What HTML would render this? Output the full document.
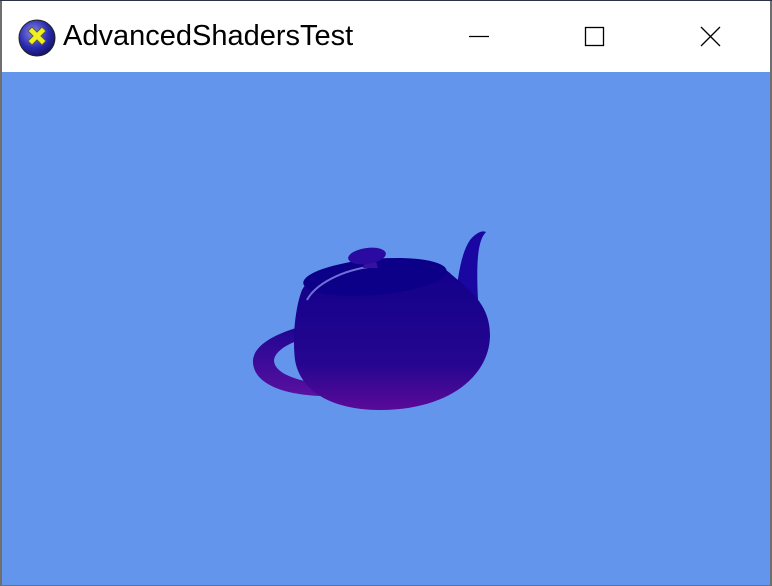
<!DOCTYPE html>
<html><head><style>
html,body{margin:0;padding:0;width:772px;height:586px;overflow:hidden;background:#6f6f6f;}
.win{position:absolute;left:2px;top:1px;width:768px;height:584px;background:#6495ED;}
.tb{position:absolute;left:0;top:0;width:768px;height:71px;background:#fff;}
.top{position:absolute;left:0;top:0;width:772px;height:1px;background:#2b3447;}
.title{position:absolute;left:61px;top:19px;font:29px "Liberation Sans",sans-serif;color:#000;letter-spacing:0;}
</style></head><body>
<div class="top"></div>
<div class="win">
 <div class="tb">
  <svg width="40" height="40" style="position:absolute;left:15px;top:17px" viewBox="0 0 40 40">
   <defs><radialGradient id="g" cx="0.4" cy="0.35" r="0.7"><stop offset="0" stop-color="#8a8ae8"/><stop offset="0.6" stop-color="#2a2ab0"/><stop offset="1" stop-color="#101060"/></radialGradient></defs>
   <circle cx="20" cy="20" r="18" fill="url(#g)" stroke="#222" stroke-width="1"/>
   <path d="M11 13 L15 9 L20 14 L25 9 L29 13 L24 18 L29 23 L25 27 L20 22 L15 27 L11 23 L16 18Z" fill="#f0f020" stroke="#555" stroke-width="1"/>
  </svg>
  <div class="title">AdvancedShadersTest</div>
  <svg width="768" height="71" style="position:absolute;left:0;top:0">
   <line x1="467" y1="35.5" x2="487" y2="35.5" stroke="#000" stroke-width="1.3"/>
   <rect x="583.5" y="26.5" width="18" height="18" fill="none" stroke="#000" stroke-width="1.3"/>
   <path d="M699 26 L718 45 M718 26 L699 45" stroke="#000" stroke-width="1.3"/>
  </svg>
 </div>
</div>
<svg width="772" height="586" style="position:absolute;left:0;top:0">
 <defs>
  <linearGradient id="b" x1="0" y1="0" x2="0" y2="1"><stop offset="0" stop-color="#10008a"/><stop offset="0.7" stop-color="#260690"/><stop offset="1" stop-color="#5a0a98"/></linearGradient>
  <linearGradient id="h" x1="0" y1="0" x2="0" y2="1"><stop offset="0" stop-color="#1a0590"/><stop offset="1" stop-color="#5a10a0"/></linearGradient>
 </defs>
 <path d="M320 322 C290 328 255 340 253 360 C252 380 275 394 320 396 L322 384 C292 380 274 372 274 360 C276 348 295 340 322 333Z" fill="url(#h)"/>
 <path d="M455 300 C458 280 460 255 470 240 C476 233 482 230 486 232 C478 240 476 260 478 300Z" fill="#1a06a0"/>
 <path d="M302 290 C310 275 335 262 370 259 C410 256 440 262 452 275 C470 290 490 305 490 335 C490 375 450 410 380 410 C330 410 300 390 295 360 C292 335 296 305 302 290Z" fill="url(#b)"/>
 <ellipse cx="375" cy="277" rx="72" ry="18" fill="#0c0088" transform="rotate(-5 375 277)"/>
 <path d="M307 300 C315 285 340 270 375 266" stroke="#7070d8" stroke-width="2" fill="none"/>
 <path d="M363 268 L378 268 L375 258 L366 258Z" fill="#3a10a0"/>
 <ellipse cx="367" cy="256" rx="19" ry="8" fill="#2a0aa0" transform="rotate(-8 367 256)"/>
</svg>
</body></html>
